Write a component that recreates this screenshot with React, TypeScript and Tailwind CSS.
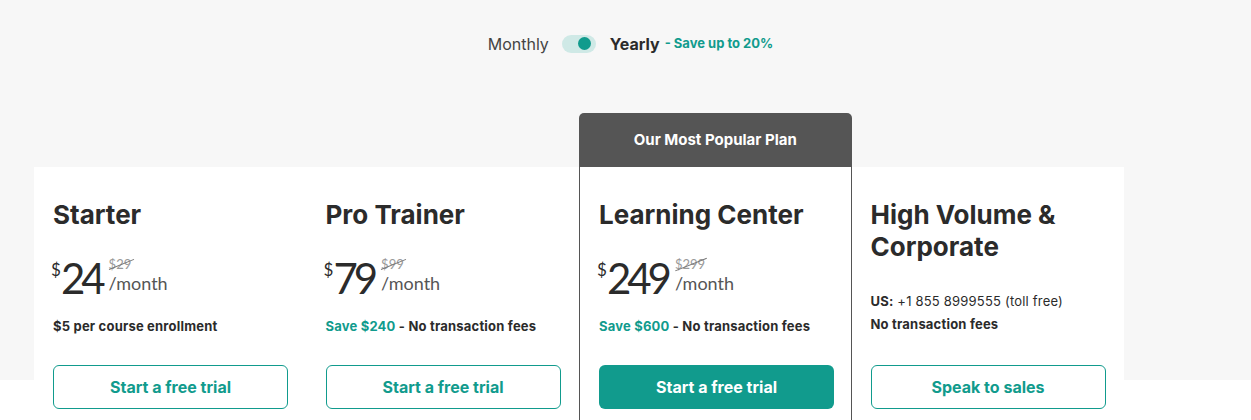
import React from "react";

const teal = "text-[#119b8d]";

type Plan = {
	name: string;
	price?: string;
	oldPrice?: string;
	save?: string;
	note: string;
	cta: string;
	popular?: boolean;
	phone?: boolean;
};

const plans: Plan[] = [
	{ name: "Starter", price: "24", oldPrice: "$29", note: "$5 per course enrollment", cta: "Start a free trial" },
	{ name: "Pro Trainer", price: "79", oldPrice: "$99", save: "Save $240", note: "No transaction fees", cta: "Start a free trial" },
	{ name: "Learning Center", price: "249", oldPrice: "$299", save: "Save $600", note: "No transaction fees", cta: "Start a free trial", popular: true },
	{ name: "High Volume & Corporate", note: "No transaction fees", cta: "Speak to sales", phone: true },
];

const PriceRow = ({ price, oldPrice }: { price: string; oldPrice: string }) => (
	<div className="flex items-start text-[#2b2b2b]">
		<span className="mt-[5px] text-[17px] leading-none font-['Lato',sans-serif]">$</span>
		<span className="text-[42px] leading-[44px] font-normal tracking-[-4px] font-['Lato',sans-serif]">
			{price}
		</span>
		<div className="ml-[7px] flex flex-col font-['Lato',sans-serif]">
			<span className="relative mt-[1px] w-fit text-[13px] leading-[14px] text-[#9a9a9a]">
				{oldPrice}
				<span className="absolute left-[-1px] right-[-3px] top-[7px] h-px -rotate-[22deg] bg-[#777]" />
			</span>
			<span className="mt-[2px] text-[18px] leading-[20px] text-[#555]">/month</span>
		</div>
	</div>
);

const Card = ({ plan }: { plan: Plan }) => (
	<div
		className={`flex flex-col bg-white px-[19px] pt-[32px] pb-[40px] ${plan.popular ? "border-x border-[#555]" : ""}`}
	>
		<div className="flex h-[166px] flex-col">
			<h2 className="text-[26px] leading-[32px] font-bold text-[#2b2b2b]">{plan.name}</h2>
			{plan.price && plan.oldPrice ? (
				<>
					<div className="mt-[25px] ml-[-2px]">
						<PriceRow price={plan.price} oldPrice={plan.oldPrice} />
					</div>
					<p className="mt-[17px] text-[13px] leading-[18px] font-bold tracking-[0.2px] text-[#2b2b2b]">
						{plan.save && <span className={teal}>{plan.save}</span>}
						{plan.save ? " - " : ""}
						{plan.note}
					</p>
				</>
			) : (
				<div className="mt-[29px] flex flex-col gap-[5px] text-[13px] leading-[18px] tracking-[0.2px] text-[#2b2b2b]">
					<p>
						<span className="font-bold">US:</span> +1 855 8999555 (toll free)
					</p>
					<p className="font-bold">{plan.note}</p>
				</div>
			)}
		</div>
		<button
			className={`h-[44px] w-[235px] rounded-[6px] text-[16px] font-bold ${
				plan.popular
					? "bg-[#119b8d] text-white"
					: `border border-[#119b8d] bg-white ${teal}`
			}`}
		>
			{plan.cta}
		</button>
	</div>
);

export default function App() {
	return (
		<div className="min-h-[420px] bg-[linear-gradient(to_bottom,#f7f7f7_380px,#ffffff_380px)] font-['Inter',sans-serif]">
			<div className="flex h-[88px] items-center justify-center pl-[10px] pb-[1px]">
				<span className="text-[16px] text-[#444]">Monthly</span>
				<div className="ml-[13px] flex h-[18px] w-[34px] items-center justify-end rounded-full bg-[#cfe9e6] pr-[5px]">
					<div className="h-[13px] w-[13px] rounded-full bg-[#119b8d]" />
				</div>
				<span className="ml-[14px] text-[16px] font-bold text-[#2b2b2b]">Yearly</span>
				<span className={`ml-[5px] text-[13px] font-bold ${teal}`}>- Save up to 20%</span>
			</div>
			<div className="ml-[34px] grid w-[1090px] grid-cols-4 pt-[25px]">
				{plans.map((p) => (
					<div key={p.name} className="flex flex-col">
						{p.popular ? (
							<div className="flex h-[54px] items-center justify-center rounded-t-[5px] bg-[#555555] text-[15px] font-bold text-white">
								Our Most Popular Plan
							</div>
						) : (
							<div className="h-[54px]" />
						)}
						<Card plan={p} />
					</div>
				))}
			</div>
		</div>
	);
}
